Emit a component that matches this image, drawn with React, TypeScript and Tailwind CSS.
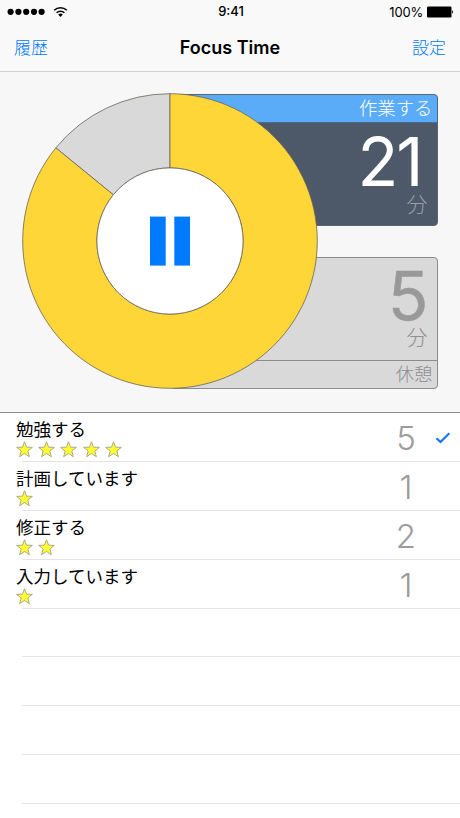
import { useState } from 'react'

type Task = { id: number; name: string; count: number }

const TASKS: Task[] = [
  { id: 1, name: '勉強する', count: 5 },
  { id: 2, name: '計画しています', count: 1 },
  { id: 3, name: '修正する', count: 2 },
  { id: 4, name: '入力しています', count: 1 },
]
const EMPTY_ROWS = 4

const RING = { c: 148, outer: 147.3, inner: 73.1 }

function ringPoint(deg: number, r: number) {
  const rad = ((deg - 90) * Math.PI) / 180
  return `${(RING.c + r * Math.cos(rad)).toFixed(2)} ${(RING.c + r * Math.sin(rad)).toFixed(2)}`
}

function ringSlice(from: number, to: number) {
  const large = to - from > 180 ? 1 : 0
  return `M${ringPoint(from, RING.inner)} L${ringPoint(from, RING.outer)} A${RING.outer} ${RING.outer} 0 ${large} 1 ${ringPoint(to, RING.outer)} L${ringPoint(to, RING.inner)} A${RING.inner} ${RING.inner} 0 ${large} 0 ${ringPoint(from, RING.inner)}Z`
}

function StatusBar() {
  return (
    <div className="grid h-6 grid-cols-3 items-center pl-[7px] pr-[6px] text-[13px] text-black">
      <div className="flex items-center">
        <svg width="38" height="8" viewBox="0 0 38 8">
          {[3.6, 11.4, 19.2, 27, 34.6].map((x) => (
            <circle key={x} cx={x} cy="3.8" r="3.1" />
          ))}
        </svg>
        <svg width="15" height="12" viewBox="0 0 15 12" className="ml-2" fill="none" stroke="black" strokeWidth="1.6">
          <path d="M1.2 4.3a9 9 0 0 1 12.6 0" />
          <path d="M3.6 6.8a5.6 5.6 0 0 1 7.8 0" />
          <path d="M7.5 10.9 5.2 8.6a3.3 3.3 0 0 1 4.6 0Z" fill="black" stroke="none" />
        </svg>
      </div>
      <span className="pl-px text-center font-medium">9:41</span>
      <div className="flex items-center justify-end">
        <span className="pt-px text-[13px] tracking-[-0.2px]">100%</span>
        <svg width="27" height="12" viewBox="0 0 27 12" className="ml-[4px]">
          <rect x="0" y="0.5" width="24.5" height="11" rx="1.2" />
          <path d="M25.2 4.3c1.2.3 1.2 3.1 0 3.4z" />
        </svg>
      </div>
    </div>
  )
}

function Ring({ running, onToggle }: { running: boolean; onToggle: () => void }) {
  return (
    <button onClick={onToggle} className="absolute top-[21.4px] left-[22px] h-[296px] w-[296px]">
      <svg width="296" height="296" viewBox="0 0 296 296" stroke="#68645c" strokeWidth="0.8">
        <path d={ringSlice(309.2, 360)} fill="#d9d9d9" />
        <path d={ringSlice(0, 309.2)} fill="#fed638" />
        <circle cx={RING.c} cy={RING.c} r={RING.inner} fill="white" />
        {running ? (
          <g fill="#007aff" stroke="none">
            <rect x="128" y="123.6" width="15.7" height="49" />
            <rect x="152.3" y="123.6" width="15.7" height="49" />
          </g>
        ) : (
          <path d="M130 120 176 148 130 176Z" fill="#007aff" stroke="none" />
        )}
      </svg>
    </button>
  )
}

function Stars({ count }: { count: number }) {
  return (
    <div className="flex gap-[5.2px]">
      {Array.from({ length: count }, (_, i) => (
        <svg key={i} width="17" height="17" viewBox="0 0 16 16">
          <path
            d="M8 .7 9.9 5.8 15.4 6 11.1 9.4 12.6 14.8 8 11.7 3.4 14.8 4.9 9.4.6 6 6.1 5.8Z"
            fill="#ffff32"
            stroke="#a6a58c"
            strokeWidth="0.9"
          />
        </svg>
      ))}
    </div>
  )
}

export default function App() {
  const [running, setRunning] = useState(true)
  const [selected, setSelected] = useState(1)

  return (
    <div className="h-[818px] w-[460px] overflow-hidden bg-white font-['Inter','Noto_Sans_CJK_JP',sans-serif]">
      <header className="h-[72px] border-b border-[#d2d2d4] bg-[#f9f9f9]">
        <StatusBar />
        <div className="flex h-[47px] items-center justify-between px-[14px]">
          <button className="pt-px text-[17px] leading-none font-light text-[#007aff]">履歴</button>
          <h1 className="text-[18px] leading-none font-semibold text-black">Focus Time</h1>
          <button className="pt-px text-[17px] leading-none font-light text-[#007aff]">設定</button>
        </div>
      </header>

      <section className="relative flex h-[341px] flex-col items-end gap-[31px] border-b border-[#8e8e8e] bg-[#f7f7f7] pt-[21.5px] pr-[22.5px]">
        <div className="h-[132px] w-[268px] overflow-hidden rounded-[4px] border border-[#5c6670] bg-[#4d5869] text-right">
          <div className="h-[28px] border-b border-[#4c6c91] bg-[#5aacf8] pr-[4px] text-[18.4px] leading-[27px] font-light text-white">
            作業する
          </div>
          <div className="pr-[9px]">
            <div className="h-[70px] pt-[13px] pr-[6px] text-[67px] leading-[52px] tracking-[-2px] text-white">21</div>
            <div className="text-[21px] leading-[24px] font-light text-[#9aa0a8]">分</div>
          </div>
        </div>
        <div className="h-[132px] w-[268px] rounded-[4px] border border-[#8c8c8c] bg-[#d9d9d9] text-right text-[#999]">
          <div className="h-[103px] border-b border-[#8c8c8c] pr-[9px]">
            <div className="h-[68px] pt-[12px] text-[67px] leading-[52px]">
              <span className="mr-[-1px] [-webkit-text-stroke:0.5px_#999]">5</span>
            </div>
            <div className="text-[21px] leading-[24px] font-light text-[#8e8e8e]">分</div>
          </div>
          <div className="pr-[4px] text-[18.4px] leading-[27px] font-light text-[#8e8e8e]">休憩</div>
        </div>
        <Ring running={running} onToggle={() => setRunning(!running)} />
      </section>

      <ul>
        {TASKS.map((task) => (
          <li key={task.id} onClick={() => setSelected(task.id)} className="flex h-[48.9px] flex-col">
            <div className="flex flex-1 items-start">
              <div className="flex-1 pl-4">
                <div className="mt-[5px] h-[23px] text-[17.5px] leading-[24px] text-black">{task.name}</div>
                <Stars count={task.count} />
              </div>
              <span className="w-[28px] pt-px text-center text-[33px] leading-[46px] font-light text-[#9c9c9c] mt-px">
                {task.count}
              </span>
              <div className="mt-px flex h-[46px] w-[40px] items-center justify-end pt-[2px] pr-[9px]">
                {selected === task.id && (
                  <svg width="16" height="12" viewBox="0 0 16 12" fill="none" stroke="#1478f0" strokeWidth="2.2">
                    <path d="M1.5 6.2 5.5 10 14.3 1.2" />
                  </svg>
                )}
              </div>
            </div>
            <div className="ml-[22px] h-px shrink-0 bg-[#e4e4e6]" />
          </li>
        ))}
        {Array.from({ length: EMPTY_ROWS }, (_, i) => (
          <li key={i} className="flex h-[48.9px] items-end pl-[22px]">
            <div className="h-px w-full bg-[#e4e4e6]" />
          </li>
        ))}
      </ul>
    </div>
  )
}
